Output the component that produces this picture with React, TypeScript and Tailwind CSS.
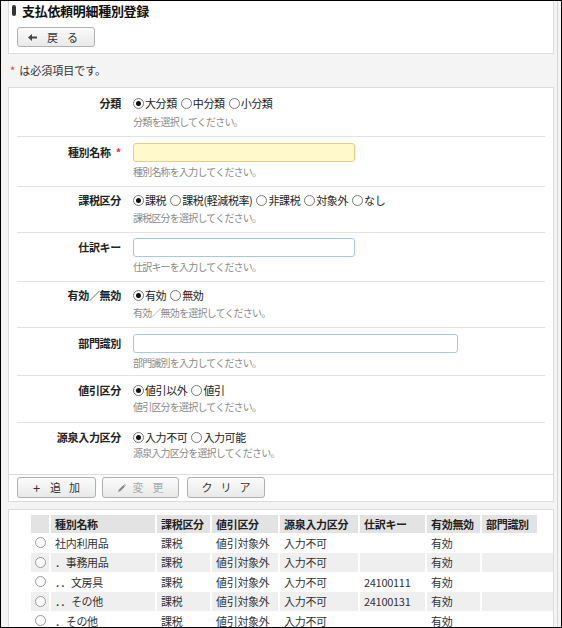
import React from "react";

const FONT = { fontFamily: '"Noto Sans CJK JP", "Noto Sans", sans-serif' };

function Radio(props: { checked?: boolean; label: string }) {
  return (
    <span className="mr-[4px] inline-flex items-center">
      <span className="mr-[1px] flex h-[11px] w-[11px] items-center justify-center rounded-full border border-[#777] bg-white">
        {props.checked && <span className="h-[5px] w-[5px] rounded-full bg-[#111]" />}
      </span>
      <span className="tracking-[-0.4px]">{props.label}</span>
    </span>
  );
}

function Help(props: { text: string; mt: string }) {
  return (
    <div className={`${props.mt} h-[14px] text-[10px] leading-[14px] tracking-[-0.8px] text-[#8a8a8a]`}>
      {props.text}
    </div>
  );
}

function RadioRow(props: {
  label: string;
  options: string[];
  help: string;
  pad: string;
  mt: string;
  last?: boolean;
}) {
  return (
    <div className={`flex ${props.pad} ${props.last ? "" : "border-b border-[#e2e2e2]"}`}>
      <div className="h-[14px] w-[104px] text-right text-[11px] font-bold leading-[14px] tracking-[-0.3px] text-[#222]">
        {props.label}
      </div>
      <div className="ml-[12px]">
        <div className="flex h-[14px] items-center text-[11px] leading-[14px] text-[#222]">
          {props.options.map((o, i) => (
            <Radio key={o} label={o} checked={i === 0} />
          ))}
        </div>
        <Help text={props.help} mt={props.mt} />
      </div>
    </div>
  );
}

function InputRow(props: {
  label: string;
  required?: boolean;
  help: string;
  pad: string;
  width: string;
  yellow?: boolean;
}) {
  return (
    <div className={`flex ${props.pad} border-b border-[#e2e2e2]`}>
      <div className="flex h-[19px] w-[104px] items-center justify-end text-[11px] font-bold tracking-[-0.3px] text-[#222]">
        {props.label}
        {props.required && <span className="ml-[5px] text-[#e33]">*</span>}
      </div>
      <div className="ml-[12px]">
        <div
          className={`h-[19px] ${props.width} rounded-[3px] border ${
            props.yellow ? "border-[#efc98a] bg-[#fff9cc]" : "border-[#a9c6ee] bg-white"
          }`}
        />
        <Help text={props.help} mt="mt-[3px]" />
      </div>
    </div>
  );
}

function Btn(props: { children: React.ReactNode; disabled?: boolean; w: string }) {
  return (
    <div
      className={`flex h-[21px] ${props.w} items-center justify-center rounded-[3px] border border-[#b0b0b0] bg-gradient-to-b from-[#fbfbfb] to-[#e9e9e9] text-[11px] ${
        props.disabled ? "text-[#aaa]" : "text-[#333]"
      }`}
    >
      {props.children}
    </div>
  );
}

const cols = "grid grid-cols-[20px_106px_55px_68px_80px_67px_55px_55px]";

const rows = [
  ["社内利用品", "課税", "値引対象外", "入力不可", "", "有効", ""],
  ["．事務用品", "課税", "値引対象外", "入力不可", "", "有効", ""],
  ["．．文房具", "課税", "値引対象外", "入力不可", "24100111", "有効", ""],
  ["．．その他", "課税", "値引対象外", "入力不可", "24100131", "有効", ""],
  ["．その他", "課税", "値引対象外", "入力不可", "", "有効", ""],
];

const headers = ["種別名称", "課税区分", "値引区分", "源泉入力区分", "仕訳キー", "有効無効", "部門識別"];

export default function App() {
  return (
    <div
      style={FONT}
      className="relative h-[628px] w-[562px] overflow-hidden border border-black bg-[#f4f4f4]"
    >
      <div className="absolute bottom-0 right-[3px] top-0 w-px bg-[#d6d6d6]" />
      <div className="ml-[7px] w-[546px]">
        {/* header panel */}
        <div className="border-x border-b border-[#dcdcdc] bg-white pt-[1px] pb-[6px]">
          <div className="flex h-[17px] items-center pl-[3px]">
            <span className="h-[11px] w-[4px] rounded-[2px] bg-[#333]" />
            <span className="ml-[6px] text-[13px] font-bold tracking-[-0.3px] text-[#111]">
              支払依頼明細種別登録
            </span>
          </div>
          <div className="ml-[8px] mt-[8px]">
            <div className="flex h-[20px] w-[78px] items-center rounded-[3px] border border-[#b0b0b0] bg-gradient-to-b from-[#fbfbfb] to-[#e9e9e9] pl-[10px] text-[11px] text-[#333]">
              <svg width="9" height="7" viewBox="0 0 9 7">
                <path d="M0 3.5 L4 0 L4 2.5 L9 2.5 L9 4.5 L4 4.5 L4 7 Z" fill="#444" />
              </svg>
              <span className="ml-[10px]">戻</span>
              <span className="ml-[9px]">る</span>
            </div>
          </div>
        </div>

        <div className="mt-[9px] flex h-[14px] items-center pl-[2px] text-[11px] text-[#333]">
          <span className="text-[#e33]">*</span>
          <span className="ml-[4px]">は必須項目です。</span>
        </div>

        {/* form panel */}
        <div className="mt-[10px] border border-[#dcdcdc] bg-white">
          <div className="px-[8px]">
            <RadioRow label="分類" options={["大分類", "中分類", "小分類"]} help="分類を選択してください。" pad="pt-[8px] pb-[7px]" mt="mt-[5px]" />
            <InputRow label="種別名称" required yellow width="w-[222px]" help="種別名称を入力してください。" pad="pt-[6px] pb-[7px]" />
            <RadioRow label="課税区分" options={["課税", "課税(軽減税率)", "非課税", "対象外", "なし"]} help="課税区分を選択してください。" pad="pt-[6px] pb-[7px]" mt="mt-[4px]" />
            <InputRow label="仕訳キー" width="w-[222px]" help="仕訳キーを入力してください。" pad="pt-[5px] pb-[7px]" />
            <RadioRow label="有効／無効" options={["有効", "無効"]} help="有効／無効を選択してください。" pad="pt-[6px] pb-[7px]" mt="mt-[4px]" />
            <InputRow label="部門識別" width="w-[325px]" help="部門識別を入力してください。" pad="pt-[6px] pb-[5px]" />
            <RadioRow label="値引区分" options={["値引以外", "値引"]} help="値引区分を選択してください。" pad="pt-[7px] pb-[8px]" mt="mt-[3px]" />
            <RadioRow label="源泉入力区分" options={["入力不可", "入力可能"]} help="源泉入力区分を選択してください。" pad="pt-[7px] pb-[14px]" mt="mt-[2px]" last />
          </div>
          <div className="flex border-t border-[#dcdcdc] pl-[8px] pt-[2px] pb-[3px]">
            <Btn w="w-[79px]">
              <span className="mr-[10px] text-[13px] leading-none">+</span>
              <span>追</span>
              <span className="ml-[8px]">加</span>
            </Btn>
            <div className="ml-[6px]">
              <Btn w="w-[77px]" disabled>
                <svg width="8" height="8" viewBox="0 0 8 8" className="mr-[7px]">
                  <path d="M0 8 L1 5.5 L5.5 1 L7 2.5 L2.5 7 Z" fill="#888" />
                  <path d="M6 0.5 L7.5 2 L8 1.5 L6.5 0 Z" fill="#888" />
                </svg>
                <span>変</span>
                <span className="ml-[9px]">更</span>
              </Btn>
            </div>
            <div className="ml-[8px]">
              <Btn w="w-[78px]">
                <span className="pl-[8px] tracking-[8px]">クリア</span>
              </Btn>
            </div>
          </div>
        </div>

        {/* list panel */}
        <div className="mt-[7px] h-[200px] border border-[#dcdcdc] bg-white pl-[22px] pt-[5px]">
          <div className={`${cols} h-[18px] text-[11px] font-bold text-[#222]`}>
            <div className="border-r-2 border-white bg-[#e3e3e3]" />
            {headers.map((h, i) => (
              <div
                key={h}
                className={`flex items-center bg-[#e3e3e3] pl-[4px] tracking-[-0.3px] ${
                  i < headers.length - 1 ? "border-r-2 border-white" : ""
                }`}
              >
                {h}
              </div>
            ))}
          </div>
          {rows.map((r, ri) => (
            <div
              key={ri}
              className={`${cols} h-[19.5px] text-[11px] text-[#333] ${ri % 2 === 1 ? "bg-[#efefef]" : "bg-white"}`}
            >
              <div className="flex items-center justify-center border-r-2 border-white">
                <span className="h-[11px] w-[11px] rounded-full border border-[#999] bg-white" />
              </div>
              {r.map((c, ci) => (
                <div
                  key={ci}
                  className={`flex items-center pl-[4px] tracking-[-0.3px] ${
                    ci < r.length - 1 ? "border-r-2 border-white" : ""
                  }`}
                >
                  {c}
                </div>
              ))}
            </div>
          ))}
        </div>
      </div>
    </div>
  );
}
